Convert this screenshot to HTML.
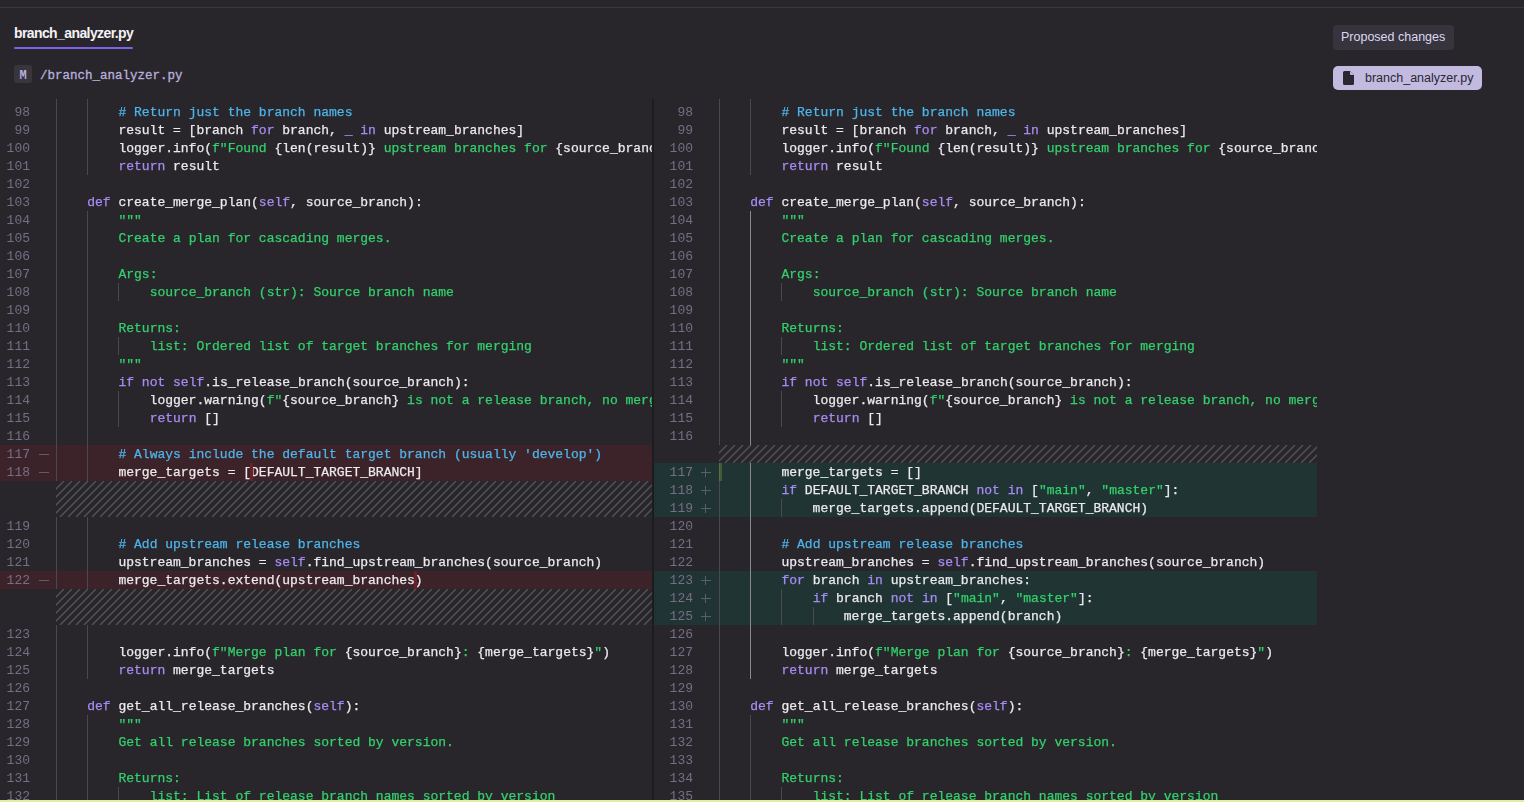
<!DOCTYPE html>
<html><head><meta charset="utf-8"><style>
*{margin:0;padding:0;box-sizing:border-box}
html,body{width:1524px;height:802px;overflow:hidden;background:#28262b}
body{position:relative;font-family:"Liberation Sans",sans-serif}
.topline{position:absolute;left:0;top:7px;width:1524px;height:1px;background:#3a383e}
.tab{position:absolute;left:14px;top:25px;font-size:14px;font-weight:bold;color:#f4f2f6;letter-spacing:-0.6px;white-space:nowrap}
.tabul{position:absolute;left:14px;top:47px;width:119px;height:2px;background:#7c62e6;border-radius:1px}
.badge{position:absolute;left:14px;top:65px;width:18px;height:18px;background:#38363c;border-radius:3px;color:#b7b0dd;font:bold 12px/22px "Liberation Mono",monospace;text-align:center}
.path{position:absolute;left:40px;top:67px;color:#b7b0dd;font:12.5px/18px "Liberation Mono",monospace;-webkit-text-stroke:0.3px #b7b0dd;white-space:nowrap}
.btn1{position:absolute;left:1333px;top:25px;width:121px;height:25px;background:#37343d;border-radius:4px;color:#ddd8f2;font-size:12.5px;line-height:25px;padding-left:8px;white-space:nowrap}
.chip{position:absolute;left:1333px;top:66px;width:149px;height:24px;background:#c3bae0;border-radius:5px;color:#2a2733;font-size:12.5px;line-height:24px;padding-left:32px;white-space:nowrap}
.chip svg{position:absolute;left:10px;top:5px}
.pnl{position:absolute;top:99px;height:701px;overflow:hidden;will-change:transform}
.row{position:absolute;left:0;right:0;height:18px}
.row.del{background:#3c2329}
.row.add{background:#1f3433}
.ln{position:absolute;top:1px;left:0;text-align:right;font:13px/18px "Liberation Mono",monospace;color:#756e84}
.mkh{position:absolute;top:9px;width:10px;height:1px;background:#635b6d}
.mkv{position:absolute;top:5px;width:1px;height:9px;background:#635b6d}
.add .mkh,.add .mkv{background:#55606a}
.g{position:absolute;top:0;width:1px;height:18px;background:#4a494e}
.g.ga{background:#8b898f}
pre.code{position:absolute;left:56px;top:1px;-webkit-text-stroke:0.25px;font:13px/18px "Liberation Mono",monospace;color:#ebe9ee;white-space:pre}
pre.code i{font-style:normal}
i.k{color:#a78bf5}
i.c{color:#4db5ea}
i.s{color:#33d06c}
.hatch{position:absolute;stroke:#535257;stroke-width:1.4}
.div{position:absolute;left:652px;top:99px;width:2px;height:701px;background:#1c1b1f}
.bottom{position:absolute;left:0;top:800px;width:1524px;height:2px;background:#e2eca2}
.cur{position:absolute;width:3px;height:18px}
</style></head><body>
<div class="topline"></div>
<div class="tab">branch_analyzer.py</div><div class="tabul"></div>
<div class="badge">M</div><div class="path">/branch_analyzer.py</div>
<div class="btn1">Proposed changes</div>
<div class="chip"><svg width="11" height="14" viewBox="0 0 11 14"><path d="M1.5 0H7l4 4v8.5A1.5 1.5 0 0 1 9.5 14h-8A1.5 1.5 0 0 1 0 12.5v-11A1.5 1.5 0 0 1 1.5 0z" fill="#2a2733"/><path d="M7 0v3a1 1 0 0 0 1 1h3z" fill="#c3bae0"/></svg>branch_analyzer.py</div>
<div class="pnl" style="left:0px;width:652px">
<div class="row" style="top:-14px"><b class="g" style="left:56.0px"></b><b class="g" style="left:87.2px"></b></div>
<div class="row" style="top:4px"><span class="ln" style="width:30px">98</span><b class="g" style="left:56.0px"></b><b class="g" style="left:87.2px"></b><pre class="code" style="left:56px">        <i class="c"># Return just the branch names</i></pre></div>
<div class="row" style="top:22px"><span class="ln" style="width:30px">99</span><b class="g" style="left:56.0px"></b><b class="g" style="left:87.2px"></b><pre class="code" style="left:56px">        result = [branch <i class="k">for</i> branch, <i class="k">_</i> <i class="k">in</i> upstream_branches]</pre></div>
<div class="row" style="top:40px"><span class="ln" style="width:30px">100</span><b class="g" style="left:56.0px"></b><b class="g" style="left:87.2px"></b><pre class="code" style="left:56px">        logger.info(<i class="s">f"</i><i class="s">Found </i>{len(result)}<i class="s"> upstream branches for </i>{source_branch}<i class="s">"</i>)</pre></div>
<div class="row" style="top:58px"><span class="ln" style="width:30px">101</span><b class="g" style="left:56.0px"></b><b class="g" style="left:87.2px"></b><pre class="code" style="left:56px">        <i class="k">return</i> result</pre></div>
<div class="row" style="top:76px"><span class="ln" style="width:30px">102</span><b class="g" style="left:56.0px"></b></div>
<div class="row" style="top:94px"><span class="ln" style="width:30px">103</span><b class="g" style="left:56.0px"></b><pre class="code" style="left:56px">    <i class="k">def</i> create_merge_plan(<i class="k">self</i>, source_branch):</pre></div>
<div class="row" style="top:112px"><span class="ln" style="width:30px">104</span><b class="g" style="left:56.0px"></b><b class="g" style="left:87.2px"></b><pre class="code" style="left:56px">        <i class="s">"""</i></pre></div>
<div class="row" style="top:130px"><span class="ln" style="width:30px">105</span><b class="g" style="left:56.0px"></b><b class="g" style="left:87.2px"></b><pre class="code" style="left:56px">        <i class="s">Create a plan for cascading merges.</i></pre></div>
<div class="row" style="top:148px"><span class="ln" style="width:30px">106</span><b class="g" style="left:56.0px"></b><b class="g" style="left:87.2px"></b></div>
<div class="row" style="top:166px"><span class="ln" style="width:30px">107</span><b class="g" style="left:56.0px"></b><b class="g" style="left:87.2px"></b><pre class="code" style="left:56px">        <i class="s">Args:</i></pre></div>
<div class="row" style="top:184px"><span class="ln" style="width:30px">108</span><b class="g" style="left:56.0px"></b><b class="g" style="left:87.2px"></b><b class="g" style="left:118.4px"></b><pre class="code" style="left:56px">            <i class="s">source_branch (str): Source branch name</i></pre></div>
<div class="row" style="top:202px"><span class="ln" style="width:30px">109</span><b class="g" style="left:56.0px"></b><b class="g" style="left:87.2px"></b></div>
<div class="row" style="top:220px"><span class="ln" style="width:30px">110</span><b class="g" style="left:56.0px"></b><b class="g" style="left:87.2px"></b><pre class="code" style="left:56px">        <i class="s">Returns:</i></pre></div>
<div class="row" style="top:238px"><span class="ln" style="width:30px">111</span><b class="g" style="left:56.0px"></b><b class="g" style="left:87.2px"></b><b class="g" style="left:118.4px"></b><pre class="code" style="left:56px">            <i class="s">list: Ordered list of target branches for merging</i></pre></div>
<div class="row" style="top:256px"><span class="ln" style="width:30px">112</span><b class="g" style="left:56.0px"></b><b class="g" style="left:87.2px"></b><pre class="code" style="left:56px">        <i class="s">"""</i></pre></div>
<div class="row" style="top:274px"><span class="ln" style="width:30px">113</span><b class="g" style="left:56.0px"></b><b class="g" style="left:87.2px"></b><pre class="code" style="left:56px">        <i class="k">if</i> <i class="k">not</i> <i class="k">self</i>.is_release_branch(source_branch):</pre></div>
<div class="row" style="top:292px"><span class="ln" style="width:30px">114</span><b class="g" style="left:56.0px"></b><b class="g" style="left:87.2px"></b><b class="g" style="left:118.4px"></b><pre class="code" style="left:56px">            logger.warning(<i class="s">f"</i>{source_branch}<i class="s"> is not a release branch, no merging needed</i><i class="s">"</i>)</pre></div>
<div class="row" style="top:310px"><span class="ln" style="width:30px">115</span><b class="g" style="left:56.0px"></b><b class="g" style="left:87.2px"></b><b class="g" style="left:118.4px"></b><pre class="code" style="left:56px">            <i class="k">return</i> []</pre></div>
<div class="row" style="top:328px"><span class="ln" style="width:30px">116</span><b class="g" style="left:56.0px"></b><b class="g" style="left:87.2px"></b></div>
<div class="row del" style="top:346px"><span class="ln" style="width:30px">117</span><b class="mkh" style="left:39px"></b><b class="g" style="left:56.0px"></b><b class="g" style="left:87.2px"></b><pre class="code" style="left:56px">        <i class="c"># Always include the default target branch (usually 'develop')</i></pre></div>
<div class="row del" style="top:364px"><span class="ln" style="width:30px">118</span><b class="mkh" style="left:39px"></b><b class="g" style="left:56.0px"></b><b class="g" style="left:87.2px"></b><pre class="code" style="left:56px">        merge_targets = [DEFAULT_TARGET_BRANCH]</pre></div>
<div class="row" style="top:418px"><span class="ln" style="width:30px">119</span><b class="g" style="left:56.0px"></b><b class="g" style="left:87.2px"></b></div>
<div class="row" style="top:436px"><span class="ln" style="width:30px">120</span><b class="g" style="left:56.0px"></b><b class="g" style="left:87.2px"></b><pre class="code" style="left:56px">        <i class="c"># Add upstream release branches</i></pre></div>
<div class="row" style="top:454px"><span class="ln" style="width:30px">121</span><b class="g" style="left:56.0px"></b><b class="g" style="left:87.2px"></b><pre class="code" style="left:56px">        upstream_branches = <i class="k">self</i>.find_upstream_branches(source_branch)</pre></div>
<div class="row del" style="top:472px"><span class="ln" style="width:30px">122</span><b class="mkh" style="left:39px"></b><b class="g" style="left:56.0px"></b><b class="g" style="left:87.2px"></b><pre class="code" style="left:56px">        merge_targets.extend(upstream_branches)</pre></div>
<div class="row" style="top:526px"><span class="ln" style="width:30px">123</span><b class="g" style="left:56.0px"></b><b class="g" style="left:87.2px"></b></div>
<div class="row" style="top:544px"><span class="ln" style="width:30px">124</span><b class="g" style="left:56.0px"></b><b class="g" style="left:87.2px"></b><pre class="code" style="left:56px">        logger.info(<i class="s">f"</i><i class="s">Merge plan for </i>{source_branch}<i class="s">: </i>{merge_targets}<i class="s">"</i>)</pre></div>
<div class="row" style="top:562px"><span class="ln" style="width:30px">125</span><b class="g" style="left:56.0px"></b><b class="g" style="left:87.2px"></b><pre class="code" style="left:56px">        <i class="k">return</i> merge_targets</pre></div>
<div class="row" style="top:580px"><span class="ln" style="width:30px">126</span><b class="g" style="left:56.0px"></b></div>
<div class="row" style="top:598px"><span class="ln" style="width:30px">127</span><b class="g" style="left:56.0px"></b><pre class="code" style="left:56px">    <i class="k">def</i> get_all_release_branches(<i class="k">self</i>):</pre></div>
<div class="row" style="top:616px"><span class="ln" style="width:30px">128</span><b class="g" style="left:56.0px"></b><b class="g" style="left:87.2px"></b><pre class="code" style="left:56px">        <i class="s">"""</i></pre></div>
<div class="row" style="top:634px"><span class="ln" style="width:30px">129</span><b class="g" style="left:56.0px"></b><b class="g" style="left:87.2px"></b><pre class="code" style="left:56px">        <i class="s">Get all release branches sorted by version.</i></pre></div>
<div class="row" style="top:652px"><span class="ln" style="width:30px">130</span><b class="g" style="left:56.0px"></b><b class="g" style="left:87.2px"></b></div>
<div class="row" style="top:670px"><span class="ln" style="width:30px">131</span><b class="g" style="left:56.0px"></b><b class="g" style="left:87.2px"></b><pre class="code" style="left:56px">        <i class="s">Returns:</i></pre></div>
<div class="row" style="top:688px"><span class="ln" style="width:30px">132</span><b class="g" style="left:56.0px"></b><b class="g" style="left:87.2px"></b><b class="g" style="left:118.4px"></b><pre class="code" style="left:56px">            <i class="s">list: List of release branch names sorted by version</i></pre></div>
<svg class="hatch" style="left:56px;top:382px" width="596" height="36"><line x1="8" y1="0" x2="-28" y2="36"/><line x1="16" y1="0" x2="-20" y2="36"/><line x1="24" y1="0" x2="-12" y2="36"/><line x1="32" y1="0" x2="-4" y2="36"/><line x1="40" y1="0" x2="4" y2="36"/><line x1="48" y1="0" x2="12" y2="36"/><line x1="56" y1="0" x2="20" y2="36"/><line x1="64" y1="0" x2="28" y2="36"/><line x1="72" y1="0" x2="36" y2="36"/><line x1="80" y1="0" x2="44" y2="36"/><line x1="88" y1="0" x2="52" y2="36"/><line x1="96" y1="0" x2="60" y2="36"/><line x1="104" y1="0" x2="68" y2="36"/><line x1="112" y1="0" x2="76" y2="36"/><line x1="120" y1="0" x2="84" y2="36"/><line x1="128" y1="0" x2="92" y2="36"/><line x1="136" y1="0" x2="100" y2="36"/><line x1="144" y1="0" x2="108" y2="36"/><line x1="152" y1="0" x2="116" y2="36"/><line x1="160" y1="0" x2="124" y2="36"/><line x1="168" y1="0" x2="132" y2="36"/><line x1="176" y1="0" x2="140" y2="36"/><line x1="184" y1="0" x2="148" y2="36"/><line x1="192" y1="0" x2="156" y2="36"/><line x1="200" y1="0" x2="164" y2="36"/><line x1="208" y1="0" x2="172" y2="36"/><line x1="216" y1="0" x2="180" y2="36"/><line x1="224" y1="0" x2="188" y2="36"/><line x1="232" y1="0" x2="196" y2="36"/><line x1="240" y1="0" x2="204" y2="36"/><line x1="248" y1="0" x2="212" y2="36"/><line x1="256" y1="0" x2="220" y2="36"/><line x1="264" y1="0" x2="228" y2="36"/><line x1="272" y1="0" x2="236" y2="36"/><line x1="280" y1="0" x2="244" y2="36"/><line x1="288" y1="0" x2="252" y2="36"/><line x1="296" y1="0" x2="260" y2="36"/><line x1="304" y1="0" x2="268" y2="36"/><line x1="312" y1="0" x2="276" y2="36"/><line x1="320" y1="0" x2="284" y2="36"/><line x1="328" y1="0" x2="292" y2="36"/><line x1="336" y1="0" x2="300" y2="36"/><line x1="344" y1="0" x2="308" y2="36"/><line x1="352" y1="0" x2="316" y2="36"/><line x1="360" y1="0" x2="324" y2="36"/><line x1="368" y1="0" x2="332" y2="36"/><line x1="376" y1="0" x2="340" y2="36"/><line x1="384" y1="0" x2="348" y2="36"/><line x1="392" y1="0" x2="356" y2="36"/><line x1="400" y1="0" x2="364" y2="36"/><line x1="408" y1="0" x2="372" y2="36"/><line x1="416" y1="0" x2="380" y2="36"/><line x1="424" y1="0" x2="388" y2="36"/><line x1="432" y1="0" x2="396" y2="36"/><line x1="440" y1="0" x2="404" y2="36"/><line x1="448" y1="0" x2="412" y2="36"/><line x1="456" y1="0" x2="420" y2="36"/><line x1="464" y1="0" x2="428" y2="36"/><line x1="472" y1="0" x2="436" y2="36"/><line x1="480" y1="0" x2="444" y2="36"/><line x1="488" y1="0" x2="452" y2="36"/><line x1="496" y1="0" x2="460" y2="36"/><line x1="504" y1="0" x2="468" y2="36"/><line x1="512" y1="0" x2="476" y2="36"/><line x1="520" y1="0" x2="484" y2="36"/><line x1="528" y1="0" x2="492" y2="36"/><line x1="536" y1="0" x2="500" y2="36"/><line x1="544" y1="0" x2="508" y2="36"/><line x1="552" y1="0" x2="516" y2="36"/><line x1="560" y1="0" x2="524" y2="36"/><line x1="568" y1="0" x2="532" y2="36"/><line x1="576" y1="0" x2="540" y2="36"/><line x1="584" y1="0" x2="548" y2="36"/><line x1="592" y1="0" x2="556" y2="36"/><line x1="600" y1="0" x2="564" y2="36"/><line x1="608" y1="0" x2="572" y2="36"/><line x1="616" y1="0" x2="580" y2="36"/><line x1="624" y1="0" x2="588" y2="36"/><line x1="632" y1="0" x2="596" y2="36"/></svg>
<svg class="hatch" style="left:56px;top:490px" width="596" height="36"><line x1="8" y1="0" x2="-28" y2="36"/><line x1="16" y1="0" x2="-20" y2="36"/><line x1="24" y1="0" x2="-12" y2="36"/><line x1="32" y1="0" x2="-4" y2="36"/><line x1="40" y1="0" x2="4" y2="36"/><line x1="48" y1="0" x2="12" y2="36"/><line x1="56" y1="0" x2="20" y2="36"/><line x1="64" y1="0" x2="28" y2="36"/><line x1="72" y1="0" x2="36" y2="36"/><line x1="80" y1="0" x2="44" y2="36"/><line x1="88" y1="0" x2="52" y2="36"/><line x1="96" y1="0" x2="60" y2="36"/><line x1="104" y1="0" x2="68" y2="36"/><line x1="112" y1="0" x2="76" y2="36"/><line x1="120" y1="0" x2="84" y2="36"/><line x1="128" y1="0" x2="92" y2="36"/><line x1="136" y1="0" x2="100" y2="36"/><line x1="144" y1="0" x2="108" y2="36"/><line x1="152" y1="0" x2="116" y2="36"/><line x1="160" y1="0" x2="124" y2="36"/><line x1="168" y1="0" x2="132" y2="36"/><line x1="176" y1="0" x2="140" y2="36"/><line x1="184" y1="0" x2="148" y2="36"/><line x1="192" y1="0" x2="156" y2="36"/><line x1="200" y1="0" x2="164" y2="36"/><line x1="208" y1="0" x2="172" y2="36"/><line x1="216" y1="0" x2="180" y2="36"/><line x1="224" y1="0" x2="188" y2="36"/><line x1="232" y1="0" x2="196" y2="36"/><line x1="240" y1="0" x2="204" y2="36"/><line x1="248" y1="0" x2="212" y2="36"/><line x1="256" y1="0" x2="220" y2="36"/><line x1="264" y1="0" x2="228" y2="36"/><line x1="272" y1="0" x2="236" y2="36"/><line x1="280" y1="0" x2="244" y2="36"/><line x1="288" y1="0" x2="252" y2="36"/><line x1="296" y1="0" x2="260" y2="36"/><line x1="304" y1="0" x2="268" y2="36"/><line x1="312" y1="0" x2="276" y2="36"/><line x1="320" y1="0" x2="284" y2="36"/><line x1="328" y1="0" x2="292" y2="36"/><line x1="336" y1="0" x2="300" y2="36"/><line x1="344" y1="0" x2="308" y2="36"/><line x1="352" y1="0" x2="316" y2="36"/><line x1="360" y1="0" x2="324" y2="36"/><line x1="368" y1="0" x2="332" y2="36"/><line x1="376" y1="0" x2="340" y2="36"/><line x1="384" y1="0" x2="348" y2="36"/><line x1="392" y1="0" x2="356" y2="36"/><line x1="400" y1="0" x2="364" y2="36"/><line x1="408" y1="0" x2="372" y2="36"/><line x1="416" y1="0" x2="380" y2="36"/><line x1="424" y1="0" x2="388" y2="36"/><line x1="432" y1="0" x2="396" y2="36"/><line x1="440" y1="0" x2="404" y2="36"/><line x1="448" y1="0" x2="412" y2="36"/><line x1="456" y1="0" x2="420" y2="36"/><line x1="464" y1="0" x2="428" y2="36"/><line x1="472" y1="0" x2="436" y2="36"/><line x1="480" y1="0" x2="444" y2="36"/><line x1="488" y1="0" x2="452" y2="36"/><line x1="496" y1="0" x2="460" y2="36"/><line x1="504" y1="0" x2="468" y2="36"/><line x1="512" y1="0" x2="476" y2="36"/><line x1="520" y1="0" x2="484" y2="36"/><line x1="528" y1="0" x2="492" y2="36"/><line x1="536" y1="0" x2="500" y2="36"/><line x1="544" y1="0" x2="508" y2="36"/><line x1="552" y1="0" x2="516" y2="36"/><line x1="560" y1="0" x2="524" y2="36"/><line x1="568" y1="0" x2="532" y2="36"/><line x1="576" y1="0" x2="540" y2="36"/><line x1="584" y1="0" x2="548" y2="36"/><line x1="592" y1="0" x2="556" y2="36"/><line x1="600" y1="0" x2="564" y2="36"/><line x1="608" y1="0" x2="572" y2="36"/><line x1="616" y1="0" x2="580" y2="36"/><line x1="624" y1="0" x2="588" y2="36"/><line x1="632" y1="0" x2="596" y2="36"/></svg>
</div>
<div class="pnl" style="left:654px;width:663px">
<div class="row" style="top:-14px"><b class="g" style="left:65.0px"></b><b class="g" style="left:96.2px"></b></div>
<div class="row" style="top:4px"><span class="ln" style="width:39px">98</span><b class="g" style="left:65.0px"></b><b class="g" style="left:96.2px"></b><pre class="code" style="left:65px">        <i class="c"># Return just the branch names</i></pre></div>
<div class="row" style="top:22px"><span class="ln" style="width:39px">99</span><b class="g" style="left:65.0px"></b><b class="g" style="left:96.2px"></b><pre class="code" style="left:65px">        result = [branch <i class="k">for</i> branch, <i class="k">_</i> <i class="k">in</i> upstream_branches]</pre></div>
<div class="row" style="top:40px"><span class="ln" style="width:39px">100</span><b class="g" style="left:65.0px"></b><b class="g" style="left:96.2px"></b><pre class="code" style="left:65px">        logger.info(<i class="s">f"</i><i class="s">Found </i>{len(result)}<i class="s"> upstream branches for </i>{source_branch}<i class="s">"</i>)</pre></div>
<div class="row" style="top:58px"><span class="ln" style="width:39px">101</span><b class="g" style="left:65.0px"></b><b class="g" style="left:96.2px"></b><pre class="code" style="left:65px">        <i class="k">return</i> result</pre></div>
<div class="row" style="top:76px"><span class="ln" style="width:39px">102</span><b class="g" style="left:65.0px"></b></div>
<div class="row" style="top:94px"><span class="ln" style="width:39px">103</span><b class="g" style="left:65.0px"></b><pre class="code" style="left:65px">    <i class="k">def</i> create_merge_plan(<i class="k">self</i>, source_branch):</pre></div>
<div class="row" style="top:112px"><span class="ln" style="width:39px">104</span><b class="g" style="left:65.0px"></b><b class="g ga" style="left:96.2px"></b><pre class="code" style="left:65px">        <i class="s">"""</i></pre></div>
<div class="row" style="top:130px"><span class="ln" style="width:39px">105</span><b class="g" style="left:65.0px"></b><b class="g ga" style="left:96.2px"></b><pre class="code" style="left:65px">        <i class="s">Create a plan for cascading merges.</i></pre></div>
<div class="row" style="top:148px"><span class="ln" style="width:39px">106</span><b class="g" style="left:65.0px"></b><b class="g ga" style="left:96.2px"></b></div>
<div class="row" style="top:166px"><span class="ln" style="width:39px">107</span><b class="g" style="left:65.0px"></b><b class="g ga" style="left:96.2px"></b><pre class="code" style="left:65px">        <i class="s">Args:</i></pre></div>
<div class="row" style="top:184px"><span class="ln" style="width:39px">108</span><b class="g" style="left:65.0px"></b><b class="g ga" style="left:96.2px"></b><b class="g" style="left:127.4px"></b><pre class="code" style="left:65px">            <i class="s">source_branch (str): Source branch name</i></pre></div>
<div class="row" style="top:202px"><span class="ln" style="width:39px">109</span><b class="g" style="left:65.0px"></b><b class="g ga" style="left:96.2px"></b></div>
<div class="row" style="top:220px"><span class="ln" style="width:39px">110</span><b class="g" style="left:65.0px"></b><b class="g ga" style="left:96.2px"></b><pre class="code" style="left:65px">        <i class="s">Returns:</i></pre></div>
<div class="row" style="top:238px"><span class="ln" style="width:39px">111</span><b class="g" style="left:65.0px"></b><b class="g ga" style="left:96.2px"></b><b class="g" style="left:127.4px"></b><pre class="code" style="left:65px">            <i class="s">list: Ordered list of target branches for merging</i></pre></div>
<div class="row" style="top:256px"><span class="ln" style="width:39px">112</span><b class="g" style="left:65.0px"></b><b class="g ga" style="left:96.2px"></b><pre class="code" style="left:65px">        <i class="s">"""</i></pre></div>
<div class="row" style="top:274px"><span class="ln" style="width:39px">113</span><b class="g" style="left:65.0px"></b><b class="g ga" style="left:96.2px"></b><pre class="code" style="left:65px">        <i class="k">if</i> <i class="k">not</i> <i class="k">self</i>.is_release_branch(source_branch):</pre></div>
<div class="row" style="top:292px"><span class="ln" style="width:39px">114</span><b class="g" style="left:65.0px"></b><b class="g ga" style="left:96.2px"></b><b class="g" style="left:127.4px"></b><pre class="code" style="left:65px">            logger.warning(<i class="s">f"</i>{source_branch}<i class="s"> is not a release branch, no merging needed</i><i class="s">"</i>)</pre></div>
<div class="row" style="top:310px"><span class="ln" style="width:39px">115</span><b class="g" style="left:65.0px"></b><b class="g ga" style="left:96.2px"></b><b class="g" style="left:127.4px"></b><pre class="code" style="left:65px">            <i class="k">return</i> []</pre></div>
<div class="row" style="top:328px"><span class="ln" style="width:39px">116</span><b class="g" style="left:65.0px"></b><b class="g ga" style="left:96.2px"></b></div>
<div class="row add" style="top:364px"><span class="ln" style="width:39px">117</span><b class="mkh" style="left:47px"></b><b class="mkv" style="left:51px"></b><b class="g" style="left:65.0px"></b><b class="g ga" style="left:96.2px"></b><pre class="code" style="left:65px">        merge_targets = []</pre></div>
<div class="row add" style="top:382px"><span class="ln" style="width:39px">118</span><b class="mkh" style="left:47px"></b><b class="mkv" style="left:51px"></b><b class="g" style="left:65.0px"></b><b class="g ga" style="left:96.2px"></b><pre class="code" style="left:65px">        <i class="k">if</i> DEFAULT_TARGET_BRANCH <i class="k">not</i> <i class="k">in</i> [<i class="s">"main"</i>, <i class="s">"master"</i>]:</pre></div>
<div class="row add" style="top:400px"><span class="ln" style="width:39px">119</span><b class="mkh" style="left:47px"></b><b class="mkv" style="left:51px"></b><b class="g" style="left:65.0px"></b><b class="g ga" style="left:96.2px"></b><b class="g" style="left:127.4px"></b><pre class="code" style="left:65px">            merge_targets.append(DEFAULT_TARGET_BRANCH)</pre></div>
<div class="row" style="top:418px"><span class="ln" style="width:39px">120</span><b class="g" style="left:65.0px"></b><b class="g ga" style="left:96.2px"></b></div>
<div class="row" style="top:436px"><span class="ln" style="width:39px">121</span><b class="g" style="left:65.0px"></b><b class="g ga" style="left:96.2px"></b><pre class="code" style="left:65px">        <i class="c"># Add upstream release branches</i></pre></div>
<div class="row" style="top:454px"><span class="ln" style="width:39px">122</span><b class="g" style="left:65.0px"></b><b class="g ga" style="left:96.2px"></b><pre class="code" style="left:65px">        upstream_branches = <i class="k">self</i>.find_upstream_branches(source_branch)</pre></div>
<div class="row add" style="top:472px"><span class="ln" style="width:39px">123</span><b class="mkh" style="left:47px"></b><b class="mkv" style="left:51px"></b><b class="g" style="left:65.0px"></b><b class="g ga" style="left:96.2px"></b><pre class="code" style="left:65px">        <i class="k">for</i> branch <i class="k">in</i> upstream_branches:</pre></div>
<div class="row add" style="top:490px"><span class="ln" style="width:39px">124</span><b class="mkh" style="left:47px"></b><b class="mkv" style="left:51px"></b><b class="g" style="left:65.0px"></b><b class="g ga" style="left:96.2px"></b><b class="g" style="left:127.4px"></b><pre class="code" style="left:65px">            <i class="k">if</i> branch <i class="k">not</i> <i class="k">in</i> [<i class="s">"main"</i>, <i class="s">"master"</i>]:</pre></div>
<div class="row add" style="top:508px"><span class="ln" style="width:39px">125</span><b class="mkh" style="left:47px"></b><b class="mkv" style="left:51px"></b><b class="g" style="left:65.0px"></b><b class="g ga" style="left:96.2px"></b><b class="g" style="left:127.4px"></b><b class="g" style="left:158.6px"></b><pre class="code" style="left:65px">                merge_targets.append(branch)</pre></div>
<div class="row" style="top:526px"><span class="ln" style="width:39px">126</span><b class="g" style="left:65.0px"></b><b class="g ga" style="left:96.2px"></b></div>
<div class="row" style="top:544px"><span class="ln" style="width:39px">127</span><b class="g" style="left:65.0px"></b><b class="g ga" style="left:96.2px"></b><pre class="code" style="left:65px">        logger.info(<i class="s">f"</i><i class="s">Merge plan for </i>{source_branch}<i class="s">: </i>{merge_targets}<i class="s">"</i>)</pre></div>
<div class="row" style="top:562px"><span class="ln" style="width:39px">128</span><b class="g" style="left:65.0px"></b><b class="g ga" style="left:96.2px"></b><pre class="code" style="left:65px">        <i class="k">return</i> merge_targets</pre></div>
<div class="row" style="top:580px"><span class="ln" style="width:39px">129</span><b class="g" style="left:65.0px"></b></div>
<div class="row" style="top:598px"><span class="ln" style="width:39px">130</span><b class="g" style="left:65.0px"></b><pre class="code" style="left:65px">    <i class="k">def</i> get_all_release_branches(<i class="k">self</i>):</pre></div>
<div class="row" style="top:616px"><span class="ln" style="width:39px">131</span><b class="g" style="left:65.0px"></b><b class="g" style="left:96.2px"></b><pre class="code" style="left:65px">        <i class="s">"""</i></pre></div>
<div class="row" style="top:634px"><span class="ln" style="width:39px">132</span><b class="g" style="left:65.0px"></b><b class="g" style="left:96.2px"></b><pre class="code" style="left:65px">        <i class="s">Get all release branches sorted by version.</i></pre></div>
<div class="row" style="top:652px"><span class="ln" style="width:39px">133</span><b class="g" style="left:65.0px"></b><b class="g" style="left:96.2px"></b></div>
<div class="row" style="top:670px"><span class="ln" style="width:39px">134</span><b class="g" style="left:65.0px"></b><b class="g" style="left:96.2px"></b><pre class="code" style="left:65px">        <i class="s">Returns:</i></pre></div>
<div class="row" style="top:688px"><span class="ln" style="width:39px">135</span><b class="g" style="left:65.0px"></b><b class="g" style="left:96.2px"></b><b class="g" style="left:127.4px"></b><pre class="code" style="left:65px">            <i class="s">list: List of release branch names sorted by version</i></pre></div>
<svg class="hatch" style="left:65px;top:346px" width="598" height="18"><line x1="8" y1="0" x2="-10" y2="18"/><line x1="16" y1="0" x2="-2" y2="18"/><line x1="24" y1="0" x2="6" y2="18"/><line x1="32" y1="0" x2="14" y2="18"/><line x1="40" y1="0" x2="22" y2="18"/><line x1="48" y1="0" x2="30" y2="18"/><line x1="56" y1="0" x2="38" y2="18"/><line x1="64" y1="0" x2="46" y2="18"/><line x1="72" y1="0" x2="54" y2="18"/><line x1="80" y1="0" x2="62" y2="18"/><line x1="88" y1="0" x2="70" y2="18"/><line x1="96" y1="0" x2="78" y2="18"/><line x1="104" y1="0" x2="86" y2="18"/><line x1="112" y1="0" x2="94" y2="18"/><line x1="120" y1="0" x2="102" y2="18"/><line x1="128" y1="0" x2="110" y2="18"/><line x1="136" y1="0" x2="118" y2="18"/><line x1="144" y1="0" x2="126" y2="18"/><line x1="152" y1="0" x2="134" y2="18"/><line x1="160" y1="0" x2="142" y2="18"/><line x1="168" y1="0" x2="150" y2="18"/><line x1="176" y1="0" x2="158" y2="18"/><line x1="184" y1="0" x2="166" y2="18"/><line x1="192" y1="0" x2="174" y2="18"/><line x1="200" y1="0" x2="182" y2="18"/><line x1="208" y1="0" x2="190" y2="18"/><line x1="216" y1="0" x2="198" y2="18"/><line x1="224" y1="0" x2="206" y2="18"/><line x1="232" y1="0" x2="214" y2="18"/><line x1="240" y1="0" x2="222" y2="18"/><line x1="248" y1="0" x2="230" y2="18"/><line x1="256" y1="0" x2="238" y2="18"/><line x1="264" y1="0" x2="246" y2="18"/><line x1="272" y1="0" x2="254" y2="18"/><line x1="280" y1="0" x2="262" y2="18"/><line x1="288" y1="0" x2="270" y2="18"/><line x1="296" y1="0" x2="278" y2="18"/><line x1="304" y1="0" x2="286" y2="18"/><line x1="312" y1="0" x2="294" y2="18"/><line x1="320" y1="0" x2="302" y2="18"/><line x1="328" y1="0" x2="310" y2="18"/><line x1="336" y1="0" x2="318" y2="18"/><line x1="344" y1="0" x2="326" y2="18"/><line x1="352" y1="0" x2="334" y2="18"/><line x1="360" y1="0" x2="342" y2="18"/><line x1="368" y1="0" x2="350" y2="18"/><line x1="376" y1="0" x2="358" y2="18"/><line x1="384" y1="0" x2="366" y2="18"/><line x1="392" y1="0" x2="374" y2="18"/><line x1="400" y1="0" x2="382" y2="18"/><line x1="408" y1="0" x2="390" y2="18"/><line x1="416" y1="0" x2="398" y2="18"/><line x1="424" y1="0" x2="406" y2="18"/><line x1="432" y1="0" x2="414" y2="18"/><line x1="440" y1="0" x2="422" y2="18"/><line x1="448" y1="0" x2="430" y2="18"/><line x1="456" y1="0" x2="438" y2="18"/><line x1="464" y1="0" x2="446" y2="18"/><line x1="472" y1="0" x2="454" y2="18"/><line x1="480" y1="0" x2="462" y2="18"/><line x1="488" y1="0" x2="470" y2="18"/><line x1="496" y1="0" x2="478" y2="18"/><line x1="504" y1="0" x2="486" y2="18"/><line x1="512" y1="0" x2="494" y2="18"/><line x1="520" y1="0" x2="502" y2="18"/><line x1="528" y1="0" x2="510" y2="18"/><line x1="536" y1="0" x2="518" y2="18"/><line x1="544" y1="0" x2="526" y2="18"/><line x1="552" y1="0" x2="534" y2="18"/><line x1="560" y1="0" x2="542" y2="18"/><line x1="568" y1="0" x2="550" y2="18"/><line x1="576" y1="0" x2="558" y2="18"/><line x1="584" y1="0" x2="566" y2="18"/><line x1="592" y1="0" x2="574" y2="18"/><line x1="600" y1="0" x2="582" y2="18"/><line x1="608" y1="0" x2="590" y2="18"/><line x1="616" y1="0" x2="598" y2="18"/></svg>
</div>
<div class="div"></div>
<div class="cur" style="left:250px;top:463px;width:3px;background:#6e1f26"></div>
<div class="cur" style="left:414px;top:571px;width:3px;background:#6e1f26"></div>
<div class="cur" style="left:719px;top:463px;width:3px;background:#405c32"></div><div class="cur" style="left:719px;top:463px;width:1px;background:#5f6c3b"></div>
<div class="bottom"></div>
</body></html>
